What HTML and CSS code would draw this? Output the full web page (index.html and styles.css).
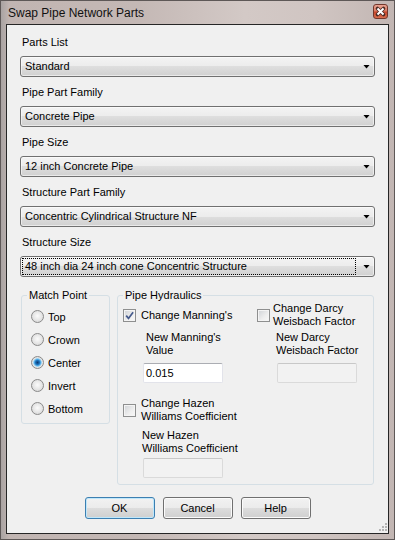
FILE: index.html
```html
<!DOCTYPE html>
<html lang="en">
<head>
	<meta charset="UTF-8">
	<title>Swap Pipe Network Parts</title>
	<link rel="stylesheet" href="styles.css">
</head>
<body>
	<div class="window">
		<!-- 标题栏 -->
		<div class="titlebar">
			<span class="title">Swap Pipe Network Parts</span>
			<span class="close">
				<svg width="13" height="13" viewBox="0 0 13 13">
					<path d="M3.5 3.5l6 6M9.5 3.5l-6 6" stroke="#4a2a24" stroke-width="3.6" stroke-linecap="round"/>
					<path d="M3.5 3.5l6 6M9.5 3.5l-6 6" stroke="#fff" stroke-width="2"/>
				</svg>
			</span>
		</div>

		<div class="client">
			<div class="field">
				<label>Parts List</label>
				<div class="combo"><span>Standard</span><i class="arrow"></i></div>
			</div>
			<div class="field">
				<label>Pipe Part Family</label>
				<div class="combo"><span>Concrete Pipe</span><i class="arrow"></i></div>
			</div>
			<div class="field">
				<label>Pipe Size</label>
				<div class="combo"><span>12 inch Concrete Pipe</span><i class="arrow"></i></div>
			</div>
			<div class="field">
				<label>Structure Part Family</label>
				<div class="combo"><span>Concentric Cylindrical Structure NF</span><i class="arrow"></i></div>
			</div>
			<div class="field">
				<label>Structure Size</label>
				<div class="combo focused"><span class="focus">48 inch dia 24 inch cone Concentric Structure</span><i class="arrow"></i></div>
			</div>

			<div class="groups">
				<fieldset class="match">
					<legend>Match Point</legend>
					<div class="radios">
						<div class="radio"><i class="dot"></i>Top</div>
						<div class="radio"><i class="dot"></i>Crown</div>
						<div class="radio"><i class="dot on"></i>Center</div>
						<div class="radio"><i class="dot"></i>Invert</div>
						<div class="radio"><i class="dot"></i>Bottom</div>
					</div>
				</fieldset>

				<fieldset class="hydraulics">
					<legend>Pipe Hydraulics</legend>
					<div class="hyd">
						<div class="col left">
							<div class="check first"><i class="box on"></i><span>Change Manning's</span></div>
							<div class="caption manning">New Manning's<br>Value</div>
							<div class="textbox">0.015</div>
							<div class="check hazen"><i class="box"></i><span>Change Hazen<br>Williams Coefficient</span></div>
							<div class="caption">New Hazen<br>Williams Coefficient</div>
							<div class="textbox disabled close-top"></div>
						</div>
						<div class="col right">
							<div class="check"><i class="box"></i><span>Change Darcy<br>Weisbach Factor</span></div>
							<div class="caption close-top">New Darcy<br>Weisbach Factor</div>
							<div class="textbox disabled"></div>
						</div>
					</div>
				</fieldset>
			</div>

			<div class="buttons">
				<button class="btn default">OK</button>
				<button class="btn">Cancel</button>
				<button class="btn">Help</button>
			</div>

			<!-- 右下角拖动点 -->
			<svg class="grip" width="10" height="8" viewBox="0 0 10 8">
				<path d="M8 0h2v2h-2zM5 3h2v2h-2zM8 3h2v2h-2zM2 6h2v2h-2zM5 6h2v2h-2zM8 6h2v2h-2z" fill="#b4b4b4"/>
			</svg>
		</div>
	</div>
</body>
</html>
```

FILE: styles.css
```css
*{
	margin: 0;
	padding: 0;
	box-sizing: border-box;
}
body{
	width: 395px;
	height: 540px;
	overflow: hidden;
	font-family: "Liberation Sans", Arial, sans-serif;
	font-size: 11px;
	color: #000;
}
.window{
	display: flex;
	flex-direction: column;
	width: 395px;
	height: 540px;
	padding: 0 5px 5px;
	border: 1px solid #5e5857;
	background: linear-gradient(to right, #a9a3a2 0, #c1b5b2 8px, #c4b8b5 35%, #d3c9c6 62%, #d0c5c2 80%, #c2b6b3 100%);
}

/* 标题栏 */
.titlebar{
	display: flex;
	align-items: center;
	justify-content: space-between;
	height: 23px;
	padding: 0 1px 0 2px;
}
.title{
	font-size: 12px;
	color: #111;
}
.close{
	display: flex;
	align-items: center;
	justify-content: center;
	width: 15px;
	height: 15px;
	margin-top: -2px;
	border: 1px solid #74372b;
	border-radius: 3px;
	background: linear-gradient(#eaa594 0, #d97a62 45%, #c6462a 55%, #d86e4f 100%);
}

/* 客户区 */
.client{
	position: relative;
	flex: 1;
	padding: 11px 13px 0;
	border: 1px solid #262626;
	background-color: #f0f0f0;
}
.field{
	margin-bottom: 9px;
}
.field label{
	display: block;
	padding-left: 2px;
	line-height: 13px;
}
.combo{
	display: flex;
	align-items: center;
	justify-content: space-between;
	height: 21px;
	margin-top: 7px;
	padding: 0 4px 0 4px;
	border: 1px solid #707070;
	border-radius: 3px;
	background: linear-gradient(#f3f3f3 0, #ececec 50%, #dedede 50%, #d0d0d0 100%);
	box-shadow: inset 0 0 0 1px rgba(255,255,255,0.55);
	line-height: 13px;
}
.combo.focused{
	padding-left: 1px;
}
.combo .focus{
	flex: 1;
	height: 17px;
	margin-right: 7px;
	padding: 1px 0 0 2px;
	border: 1px dotted #000;
}
.arrow{
	width: 7px;
	height: 4px;
	background: #000;
	clip-path: polygon(0 0, 100% 0, 50% 100%);
}

/* 分组框（上边距与 .field 的 9px 合并） */
.groups{
	display: flex;
	align-items: flex-start;
	gap: 7px;
	margin-top: 12px;
	padding-left: 1px;
}
fieldset{
	padding: 0;
	border: 1px solid #d5dfe5;
	border-radius: 3px;
}
legend{
	margin-left: 5px;
	padding: 0 2px;
	line-height: 13px;
}
.match{
	width: 89px;
}
.radios{
	padding: 3px 0 3px 9px;
}
.radio{
	display: flex;
	align-items: center;
	gap: 4px;
	height: 23px;
}
.dot{
	width: 13px;
	height: 13px;
	border: 1px solid #8a8a8a;
	border-radius: 50%;
	background: radial-gradient(circle at 50% 45%, #fbfbfb 0, #e9e9e9 45%, #d0d0d0 100%);
}
.dot.on{
	background: radial-gradient(circle, #0b3a72 0, #1b6fb8 2px, #48a3e0 3px, #9ad2f3 4px, #e6e6e6 4.6px, #d0d0d0 100%);
}
.hydraulics{
	width: 257px;
}
.hyd{
	display: flex;
	padding: 0 0 6px 5px;
}
.col.left{
	width: 134px;
}
.check{
	display: flex;
	align-items: center;
	gap: 5px;
	line-height: 13px;
}
.check.first{
	margin-top: 7px;
}
.check.hazen{
	margin-top: 14px;
}
.right .check{
	gap: 3px;
}
.box{
	flex: none;
	width: 13px;
	height: 13px;
	border: 1px solid #8e8f8f;
	background: linear-gradient(135deg, #cfd2d6 0, #eeeeee 60%, #f8f8f8 100%);
	box-shadow: inset 0 0 0 1px #f4f4f4;
}
.box.on{
	background-image: url("data:image/svg+xml,%3Csvg xmlns='http://www.w3.org/2000/svg' width='11' height='11'%3E%3Cpath d='M2.2 5.6l2.3 2.8 4.6-6.2' fill='none' stroke='%23455a8c' stroke-width='1.7'/%3E%3C/svg%3E"), linear-gradient(135deg, #cfd2d6 0, #eeeeee 60%, #f8f8f8 100%);
}
.caption{
	margin-top: 6px;
	padding-left: 19px;
	line-height: 13px;
}
.caption.manning{
	margin-top: 9px;
	padding-left: 23px;
}
.textbox{
	width: 80px;
	height: 20px;
	margin: 6px 0 0 20px;
	padding: 3px 0 0 2px;
	border: 1px solid #e2e3ea;
	border-top-color: #abadb3;
	border-radius: 2px;
	background-color: #fff;
	line-height: 13px;
}
.textbox.disabled{
	border-color: #dadada;
	border-top-color: #c8c8c8;
	background-color: #f2f2f2;
}
.close-top{
	margin-top: 3px;
}

/* 按钮 */
.buttons{
	display: flex;
	justify-content: center;
	gap: 8px;
	margin-top: 12px;
}
.btn{
	width: 70px;
	height: 22px;
	border: 1px solid #707070;
	border-radius: 3px;
	background: linear-gradient(#f2f2f2 0, #ebebeb 50%, #dddddd 50%, #cfcfcf 100%);
	box-shadow: inset 0 0 0 1px #fbfbfb;
	font-family: inherit;
	font-size: 11px;
	color: #000;
}
.btn.default{
	border-color: #3c7fb1;
	box-shadow: inset 0 0 0 1px #bfe7fb;
}
.grip{
	position: absolute;
	right: 1px;
	bottom: 2px;
}
```
